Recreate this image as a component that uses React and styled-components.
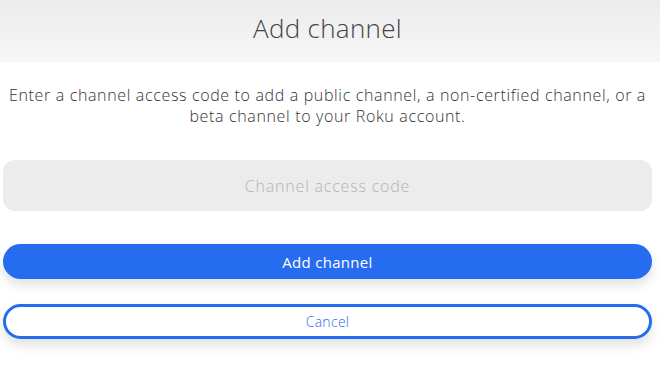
import React from "react";
import styled, { createGlobalStyle } from "styled-components";

const Global = createGlobalStyle`
    body {
        margin: 0;
        background: #fff;
        font-family: "Open Sans", Lato, sans-serif;
    }
`
const Page = styled.div`
    width: 660px;
    height: 365px;
    overflow: hidden;
`
const Header = styled.div`
    height: 62px;
    display: flex;
    align-items: center;
    justify-content: center;
    padding-right: 5px;
    box-sizing: border-box;
    background: linear-gradient(to bottom, #ececec, #f6f6f6);
`
const Title = styled.h1`
    margin: 0 0 6px;
    font-size: 26px;
    font-weight: 300;
    color: #444;
    letter-spacing: 0.3px;
`
const Body = styled.div`
    display: flex;
    flex-direction: column;
    padding: 23px 8px 0 3px;
`
const Intro = styled.p`
    margin: 0;
    font-size: 16px;
    font-weight: 300;
    line-height: 21px;
    letter-spacing: 0.65px;
    color: #333;
    text-align: center;
    white-space: nowrap;
`
const CodeInput = styled.input`
    margin-top: 33px;
    height: 51px;
    box-sizing: border-box;
    border: none;
    border-radius: 12px;
    background: #ececec;
    font-family: inherit;
    font-size: 16px;
    font-weight: 300;
    letter-spacing: 0.8px;
    text-align: center;
    outline: none;
    &::placeholder {
        color: #b4b4b4;
    }
`
const Button = styled.button`
    height: 35px;
    margin-top: ${(props) => props.gap}px;
    box-sizing: border-box;
    border-radius: 18px;
    font-family: inherit;
    font-size: ${(props) => (props.primary ? "15px" : "14px")};
    font-weight: ${(props) => (props.primary ? 400 : 300)};
    letter-spacing: 0.3px;
    color: ${(props) => (props.primary ? "#fff" : "#2b6cf0")};
    background: ${(props) => (props.primary ? "#256cef" : "#fff")};
    border: ${(props) => (props.primary ? "none" : "3px solid #256cef")};
    box-shadow: 0 6px 12px rgba(0, 0, 0, 0.12);
    cursor: pointer;
`

const App = () => {
    return (
        <Page>
            <Global />
            <Header>
                <Title>Add channel</Title>
            </Header>
            <Body>
                <Intro>
                    Enter a channel access code to add a public channel, a non-certified channel, or a
                    <br />
                    beta channel to your Roku account.
                </Intro>
                <CodeInput placeholder="Channel access code" />
                <Button primary gap={33}>Add channel</Button>
                <Button gap={25}>Cancel</Button>
            </Body>
        </Page>
    )
}

export default App;
